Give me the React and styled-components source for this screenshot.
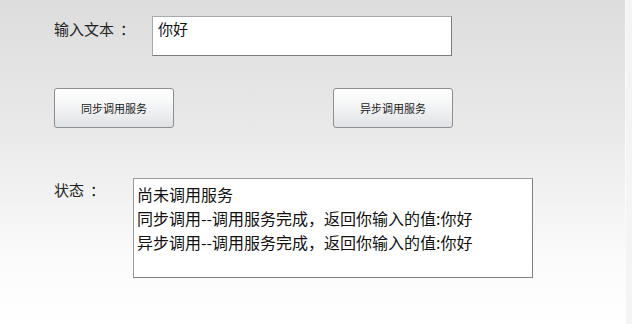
import React from 'react'
import styled, { createGlobalStyle } from 'styled-components'

const GlobalStyle = createGlobalStyle`
  html, body {
    margin: 0;
    padding: 0;
    height: 100%;
    background: #f4f4f4;
  }
  body {
    font-family: "Noto Sans CJK SC", "Liberation Sans", sans-serif;
    color: #1e1e1e;
  }
`

const Window = styled.div`
  width: 626px;
  height: 324px;
  box-sizing: border-box;
  border-right: 1px solid #fbfbfb;
  background: linear-gradient(to bottom, #dddddd 0%, #e9e9e9 40%, #fafafa 78%, #ffffff 100%);
  padding: 16px 0 0 54px;
`

const Row = styled.div`
  display: flex;
  align-items: flex-start;
  gap: ${p => p.$gap || 0}px;
  margin-top: ${p => p.$top || 0}px;
`

const Label = styled.div`
  width: ${p => p.$width}px;
  flex: none;
  font-size: 15px;
  line-height: 20px;
  padding-top: ${p => p.$pad || 0}px;
  color: #222;
  white-space: nowrap;
`

const Colon = styled.span`
  margin-left: 6px;
`

const TextInput = styled.input`
  width: 300px;
  height: 40px;
  box-sizing: border-box;
  margin: 0;
  padding: 0 5px 16px;
  border: 1px solid #a9a9a9;
  border-right-color: #7c7c7c;
  border-bottom-color: #7c7c7c;
  background: #fff;
  font-family: inherit;
  font-size: 15px;
  line-height: 20px;
  color: #111;
  outline: none;
`

const Button = styled.button`
  width: 120px;
  height: 40px;
  box-sizing: border-box;
  margin: 0;
  padding: 0;
  border: 1px solid #8e8e8e;
  border-radius: 3px;
  background: linear-gradient(to bottom, #ffffff 0%, #f4f5f6 45%, #dfe2e5 100%);
  font-family: inherit;
  font-size: 11px;
  color: #1a1a1a;
  cursor: pointer;
`

const StatusBox = styled.textarea`
  width: 400px;
  height: 100px;
  box-sizing: border-box;
  margin: 0;
  padding: 3px 3px;
  border: 1px solid #9a9a9a;
  border-right-color: #808080;
  border-bottom-color: #808080;
  background: #fff;
  font-family: inherit;
  font-size: 16px;
  line-height: 24px;
  color: #111;
  resize: none;
  overflow: hidden;
  outline: none;
`

const statusLines = [
  '尚未调用服务',
  '同步调用--调用服务完成，返回你输入的值:你好',
  '异步调用--调用服务完成，返回你输入的值:你好',
]

export default function App() {
  return (
    <>
      <GlobalStyle />
      <Window>
        <Row>
          <Label $width={98} $pad={3}>输入文本<Colon>：</Colon></Label>
          <TextInput defaultValue="你好" />
        </Row>
        <Row $top={32} $gap={159}>
          <Button>同步调用服务</Button>
          <Button>异步调用服务</Button>
        </Row>
        <Row $top={50}>
          <Label $width={79} $pad={2}>状态<Colon>：</Colon></Label>
          <StatusBox readOnly value={statusLines.join('\n')} />
        </Row>
      </Window>
    </>
  )
}
